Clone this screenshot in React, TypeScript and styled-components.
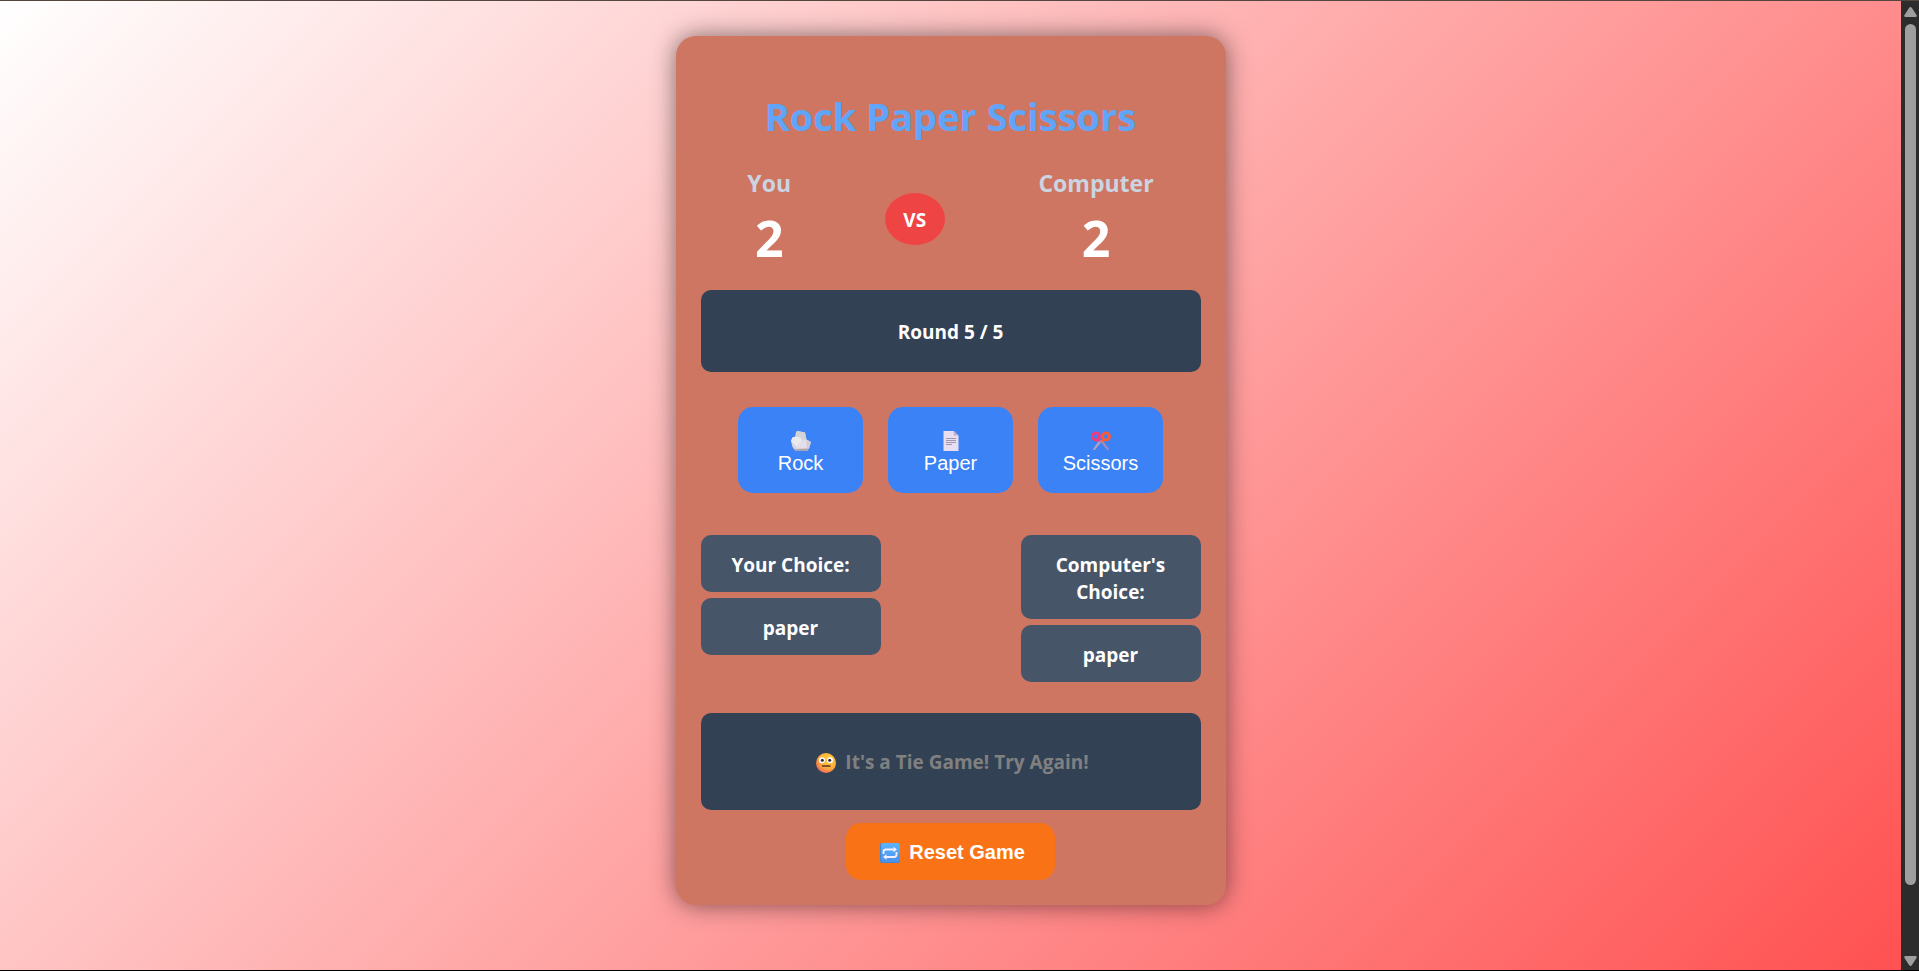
import React, { useState } from 'react';
import styled, { createGlobalStyle } from 'styled-components';

const GlobalStyle = createGlobalStyle`
  * { box-sizing: border-box; }
  body {
    margin: 0;
    font-family: "Open Sans", "Noto Sans", sans-serif;
    font-size: 20px;
    line-height: 27px;
    color: #ffffff;
  }
`;

const Frame = styled.div`
  display: flex;
  min-height: 100vh;
  border-top: 1px solid #54463f;
  border-bottom: 1px solid #000000;
  background: #2c2c2c;
`;

const Page = styled.main`
  flex: 1;
  display: flex;
  justify-content: center;
  align-items: flex-start;
  padding: 35px 20px;
  background: linear-gradient(135deg, #ffffff, #ff4d4d) top left / 100% 107%;
`;

const Card = styled.section`
  width: 100%;
  max-width: 550px;
  padding: 25px;
  border-radius: 20px;
  background: #cf7663;
  box-shadow: 0 0 25px rgba(0, 0, 0, 0.5);
  text-align: center;
`;

const Title = styled.h1`
  margin: 29px 0 24px;
  font-size: 38px;
  line-height: 53px;
  font-weight: 700;
  color: #60a5fa;
`;

const ScoreBoard = styled.div`
  display: flex;
  justify-content: space-around;
  align-items: center;
  margin-bottom: 19px;
`;

const PlayerName = styled.h2`
  margin: 0 0 7px;
  font-size: 23px;
  line-height: 32px;
  font-weight: 700;
  color: #cbd5e1;
`;

const Score = styled.p`
  margin: 0;
  font-size: 50px;
  line-height: 65px;
  font-weight: 700;
`;

const Versus = styled.div`
  width: 60px;
  padding: 14px 0 11px;
  border-radius: 50%;
  background: #ef4444;
  font-size: 19px;
  font-weight: 700;
`;

const Banner = styled.div<{ $tall?: boolean; $muted?: boolean }>`
  display: flex;
  justify-content: center;
  align-items: center;
  min-height: ${p => (p.$tall ? 97 : 82)}px;
  padding-top: 2px;
  border-radius: 10px;
  background: #334155;
  color: ${p => (p.$muted ? '#808080' : '#ffffff')};
  font-size: 19px;
  font-weight: 700;
`;

const Moves = styled.div`
  display: flex;
  justify-content: center;
  gap: 25px;
  margin: 35px 0 42px;
`;

const MoveButton = styled.button`
  display: flex;
  flex-direction: column;
  align-items: center;
  gap: 1px;
  width: 125px;
  padding: 24px 0 18px;
  border: none;
  border-radius: 15px;
  background: #3b82f6;
  color: #ffffff;
  font-family: "Liberation Sans", Arial, sans-serif;
  font-size: 20px;
  line-height: 23px;
  cursor: pointer;
`;

const Choices = styled.div`
  display: flex;
  justify-content: space-between;
  align-items: flex-start;
  margin-bottom: 31px;
`;

const ChoiceColumn = styled.div`
  display: flex;
  flex-direction: column;
  gap: 6px;
  width: 180px;
`;

const ChoiceBox = styled.div`
  padding: 17px 15px 13px;
  border-radius: 10px;
  background: #475569;
  font-size: 19px;
  font-weight: 700;
`;

const ResetButton = styled.button`
  display: inline-flex;
  align-items: center;
  gap: 5px;
  margin-top: 13px;
  padding: 18px 30px 16px;
  border: none;
  border-radius: 15px;
  background: #f97316;
  color: #ffffff;
  font-family: "Liberation Sans", Arial, sans-serif;
  font-size: 20px;
  line-height: 23px;
  font-weight: 700;
  cursor: pointer;
`;

const Glyph = styled.svg`
  display: block;
  flex: none;
  width: 28px;
  height: 20px;
`;

const MoveGlyph = styled(Glyph)`
  width: 20px;
`;

const InlineGlyph = styled(Glyph)`
  margin-right: 5px;
`;

const Scrollbar = styled.div`
  display: flex;
  flex-direction: column;
  align-items: center;
  width: 18px;
  padding: 6px 0 4px;
  background: #2c2c2c;
`;

const Track = styled.div`
  flex: 1;
  width: 11px;
  margin: 7px 0 3px;
`;

const Thumb = styled.div`
  height: 92.7%;
  border-radius: 6px;
  background: #9f9f9f;
`;

const Arrow = styled.svg`
  display: block;
  width: 13px;
  height: 10px;
  fill: #9f9f9f;
`;

const RockIcon = () => (
  <MoveGlyph viewBox="0 0 20 20" aria-hidden="true">
    <path d="M5 1 6.500 0 14 1.500l1.500 7 4.500 2.500-2 6.500-2 2.500H4.500L1.500 16 0 10l1.500-3.500L4.500 5.500z" fill="#d6d4d9" />
    <path d="M5 1 6.500 0 14 1.500l1.300 7L10 8 4.500 5.500z" fill="#d3d5d5" />
    <path d="M4.500 5.500 10 7l1 3-6 5.500L0 10l1.500-3.500z" fill="#e9e9ef" />
    <path d="m11 10 4.200-2 .8 9.500-10.500.5-.5-2.500z" fill="#e3dee9" />
    <path d="m15.300 8.500 4.700 2.500-2 6.500-2 .5z" fill="#d2cdd6" />
    <path d="m4 18 13.500-.5-1.500 2.500H4.500z" fill="#aaa6ad" />
  </MoveGlyph>
);

const PaperIcon = () => (
  <MoveGlyph viewBox="0 0 20 20" aria-hidden="true">
    <path d="M2.500 0h10.200l4.800 4.500V20h-15z" fill="#e7def1" />
    <path d="M12.700 0v4.500h4.800z" fill="#bdb1ca" />
    <path d="M5 7.500h10M5 9.500h10M5 11.500h10M5 13.500h6" stroke="#a298ac" strokeWidth="1" />
  </MoveGlyph>
);

const ScissorsIcon = () => (
  <MoveGlyph viewBox="0 0 20 20" aria-hidden="true">
    <path d="m8.500 9.500 3-.5 6.500 9-1.500 1.500z" fill="#a48bb8" />
    <path d="m11.500 9.500-3-.5L2 18l1.500 1.500z" fill="#b59cc0" />
    <ellipse cx="5" cy="5.500" rx="3.500" ry="3.600" fill="none" stroke="#f93878" strokeWidth="2.800" />
    <ellipse cx="15" cy="5.500" rx="3.500" ry="3.600" fill="none" stroke="#ff5a36" strokeWidth="2.800" />
    <path d="m7 7.500 3 2.500-1 1-3-2z" fill="#f93878" />
    <path d="m13 7.500-3 2.500 1 1 3-2z" fill="#ff5a36" />
  </MoveGlyph>
);

const FaceIcon = () => (
  <InlineGlyph viewBox="-4 0 28 20" aria-hidden="true">
    <defs>
      <radialGradient id="face" cx="0.65" cy="0.3" r="0.8">
        <stop offset="0" stopColor="#ffcf3f" />
        <stop offset="0.6" stopColor="#fbab3c" />
        <stop offset="1" stopColor="#f0605c" />
      </radialGradient>
    </defs>
    <circle cx="10" cy="10" r="10" fill="url(#face)" />
    <circle cx="6" cy="7.300" r="3" fill="#ffffff" />
    <circle cx="14" cy="7.300" r="3" fill="#ffffff" />
    <circle cx="6.300" cy="7.300" r="1.500" fill="#35243c" />
    <circle cx="13.700" cy="7.300" r="1.500" fill="#35243c" />
    <path d="M6.500 13h7.500" stroke="#5a3529" strokeWidth="1.400" strokeLinecap="round" />
  </InlineGlyph>
);

const RepeatIcon = () => (
  <Glyph viewBox="-4 0 28 20" aria-hidden="true">
    <defs>
      <linearGradient id="tile" x1="0" y1="0" x2="0" y2="1">
        <stop offset="0" stopColor="#5cb4fc" />
        <stop offset="1" stopColor="#4a92ea" />
      </linearGradient>
    </defs>
    <rect width="20" height="20" rx="2" fill="#4187d8" />
    <rect x="1" width="19" height="19" rx="2" fill="url(#tile)" />
    <g fill="none" stroke="#f3f1ff" strokeWidth="1.800">
      <path d="M3.500 11V9q0-2.500 2.500-2.500h8" />
      <path d="M16.500 9v2.500q0 2.500-2.500 2.500H6" />
    </g>
    <path d="M13.500 3.800 17 6.500l-3.500 2.700zM6.500 11.300 3 14l3.500 2.700z" fill="#f3f1ff" />
  </Glyph>
);

const moves = [
  { name: 'Rock', Icon: RockIcon },
  { name: 'Paper', Icon: PaperIcon },
  { name: 'Scissors', Icon: ScissorsIcon },
];

const initialGame = { you: 2, computer: 2, round: 5, yourChoice: 'paper', computerChoice: 'paper' };

export default function App() {
  const [game, setGame] = useState(initialGame);

  return (
    <>
      <GlobalStyle />
      <Frame>
        <Page>
          <Card>
            <Title>Rock Paper Scissors</Title>
            <ScoreBoard>
              <div>
                <PlayerName>You</PlayerName>
                <Score>{game.you}</Score>
              </div>
              <Versus>VS</Versus>
              <div>
                <PlayerName>Computer</PlayerName>
                <Score>{game.computer}</Score>
              </div>
            </ScoreBoard>
            <Banner>Round {game.round} / 5</Banner>
            <Moves>
              {moves.map(({ name, Icon }) => (
                <MoveButton
                  key={name}
                  type="button"
                  onClick={() => setGame({ ...game, yourChoice: name.toLowerCase() })}
                >
                  <Icon />
                  {name}
                </MoveButton>
              ))}
            </Moves>
            <Choices>
              <ChoiceColumn>
                <ChoiceBox>Your Choice:</ChoiceBox>
                <ChoiceBox>{game.yourChoice}</ChoiceBox>
              </ChoiceColumn>
              <ChoiceColumn>
                <ChoiceBox>Computer's Choice:</ChoiceBox>
                <ChoiceBox>{game.computerChoice}</ChoiceBox>
              </ChoiceColumn>
            </Choices>
            <Banner $tall $muted role="status">
              <FaceIcon />
              It's a Tie Game! Try Again!
            </Banner>
            <ResetButton type="button" onClick={() => setGame(initialGame)}>
              <RepeatIcon />
              Reset Game
            </ResetButton>
          </Card>
        </Page>
        <Scrollbar aria-hidden="true">
          <Arrow viewBox="0 0 13 10">
            <path d="M6.500 0q.8 0 1.300.8L12.500 8q.8 2-1 2h-10q-1.800 0-1-2L5.200.8Q5.700 0 6.500 0z" />
          </Arrow>
          <Track>
            <Thumb />
          </Track>
          <Arrow viewBox="0 0 13 10">
            <path d="M6.500 10q.8 0 1.300-.8L12.500 2q.8-2-1-2h-10Q-.3 0 .5 2l4.700 7.200q.5.8 1.300.8z" />
          </Arrow>
        </Scrollbar>
      </Frame>
    </>
  );
}
